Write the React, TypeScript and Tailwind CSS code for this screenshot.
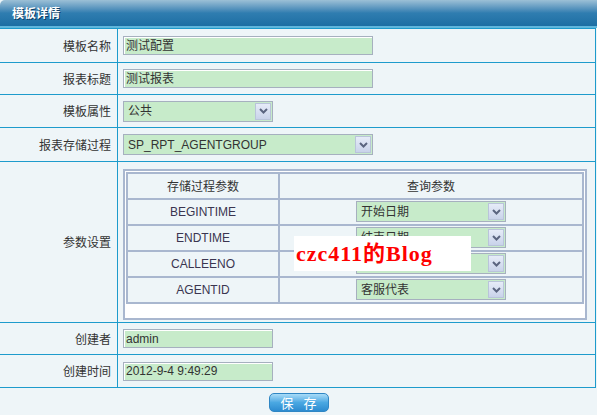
import { ReactNode } from "react";

const cjk = "font-['SimSun','Noto_Sans_CJK_SC',sans-serif]";

const TextBox = ({ value, w = "w-[250px]" }: { value: string; w?: string }) => (
  <div className={`${w} h-[19px] border border-[#a6b0bf] bg-[#c7ebca] flex items-center px-[2px] text-[12px] text-[#333] shadow-[inset_1px_1px_0_#fff]`}>
    {value}
  </div>
);

const Chevron = () => (
  <svg width="9" height="6" viewBox="0 0 9 6">
    <path d="M1 1 L4.5 4.5 L8 1" fill="none" stroke="#5b6580" strokeWidth="2" />
  </svg>
);

const Select = ({ value, w }: { value: string; w: string }) => (
  <div className={`${w} h-[21px] border border-[#a6b0bf] bg-[#c7ebca] flex items-center text-[12px] text-[#333] p-[1px]`}>
    <span className="flex-1 pl-[3px]">{value}</span>
    <div className="w-[16px] h-[17px] border border-[#b9c4da] bg-gradient-to-b from-[#e6ecf8] to-[#c9d3ea] flex items-center justify-center">
      <Chevron />
    </div>
  </div>
);

const Row = ({ label, h, children }: { label: string; h: string; children: ReactNode }) => (
  <div className={`flex border-b border-[#1d9bcc] ${h}`}>
    <div className={`w-[118px] shrink-0 border-r border-[#1d9bcc] flex items-center justify-end pr-[6px] text-[12px] text-[#333] ${cjk}`}>
      {label}
    </div>
    <div className="flex-1 flex items-center pl-[5px]">{children}</div>
  </div>
);

const params = [
  { name: "BEGINTIME", value: "开始日期" },
  { name: "ENDTIME", value: "结束日期" },
  { name: "CALLEENO", value: "被叫号码" },
  { name: "AGENTID", value: "客服代表" },
];

export default function App() {
  return (
    <div className="w-[597px] h-[415px] bg-[#eef5f8] font-['Liberation_Sans','Noto_Sans_CJK_SC',sans-serif] relative overflow-hidden">
      {/* title bar */}
      <div className="h-[26px] rounded-tl-[5px] bg-gradient-to-b from-[#9cc0d6] via-[#2f7db0] to-[#1c6ea3] flex items-center pl-[12px]">
        <span className={`text-white font-bold text-[12px] [text-shadow:1px_1px_0_#0d3f66] ${cjk}`}>模板详情</span>
      </div>
      <div className="h-[2px] bg-[#5fb6dc]" />

      <div className="border-t border-[#1d9bcc] border-r mr-[1px]">
        <Row label="模板名称" h="h-[34px]">
          <TextBox value="测试配置" />
        </Row>
        <Row label="报表标题" h="h-[32px]">
          <TextBox value="测试报表" />
        </Row>
        <Row label="模板属性" h="h-[33px]">
          <Select value="公共" w="w-[150px]" />
        </Row>
        <Row label="报表存储过程" h="h-[34px]">
          <Select value="SP_RPT_AGENTGROUP" w="w-[250px]" />
        </Row>
        <Row label="参数设置" h="h-[161px]">
          <div className="w-[464px] h-[151px] border-2 border-[#a9b7cf] bg-white p-[1px] mt-[4px]">
            <div className="border-t-2 border-l-2 border-[#a9b7cf] bg-[#eef5f8] text-[12px] text-[#3a3550]">
              <div className="flex h-[26px] border-b-2 border-[#a9b7cf]">
                <div className={`w-[152px] border-r-2 border-[#a9b7cf] flex items-center justify-center text-[#333] ${cjk}`}>存储过程参数</div>
                <div className={`flex-1 border-r-2 border-[#a9b7cf] flex items-center justify-center text-[#333] ${cjk}`}>查询参数</div>
              </div>
              {params.map((p) => (
                <div key={p.name} className="flex h-[26px] border-b-2 border-[#a9b7cf]">
                  <div className="w-[152px] border-r-2 border-[#a9b7cf] flex items-center justify-center">{p.name}</div>
                  <div className="flex-1 border-r-2 border-[#a9b7cf] flex items-center justify-center">
                    <Select value={p.value} w="w-[150px]" />
                  </div>
                </div>
              ))}
            </div>
          </div>
        </Row>
        <Row label="创建者" h="h-[32px]">
          <TextBox value="admin" w="w-[150px]" />
        </Row>
        <Row label="创建时间" h="h-[33px]">
          <TextBox value="2012-9-4 9:49:29" w="w-[150px]" />
        </Row>
      </div>

      <div className="flex justify-center pt-[5px] pl-[0px]">
        <button className={`w-[60px] h-[19px] rounded-[5px] border border-[#2f86c4] bg-gradient-to-b from-[#a8dcf8] via-[#4aa8e2] to-[#2c8bd0] text-white text-[13px] leading-none tracking-[10px] pl-[10px] ${cjk}`}>
          保存
        </button>
      </div>

      {/* watermark */}
      <div className="absolute left-[294px] top-[236px] w-[177px] h-[35px] bg-white flex items-center pl-[2px]">
        <span className="text-[#ff0000] font-bold text-[22px] font-['Liberation_Serif','Noto_Sans_CJK_SC',serif] tracking-[1px]">czc411的Blog</span>
      </div>
    </div>
  );
}
